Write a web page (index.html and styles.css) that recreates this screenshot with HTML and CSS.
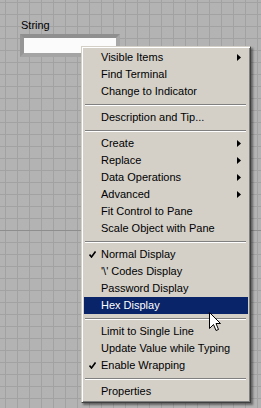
FILE: index.html
```html
<!DOCTYPE html>
<html lang="en">
<head>
    <meta charset="UTF-8">
    <title>Front Panel - String</title>
    <link rel="stylesheet" href="styles.css">
</head>
<body>
    <div class="panel">
        <div class="pane-split"></div>

        <!-- string control on the front panel -->
        <div class="control">
            <div class="control-label">String</div>
            <div class="control-frame">
                <div class="control-box"></div>
            </div>
        </div>

        <!-- shortcut menu -->
        <ul class="menu">
            <li class="item">Visible Items<svg class="arrow" width="4" height="7" viewBox="0 0 4 7"><polygon points="0,0 4,3.5 0,7" /></svg></li>
            <li class="item">Find Terminal</li>
            <li class="item">Change to Indicator</li>
            <li class="sep"></li>
            <li class="item">Description and Tip...</li>
            <li class="sep"></li>
            <li class="item">Create<svg class="arrow" width="4" height="7" viewBox="0 0 4 7"><polygon points="0,0 4,3.5 0,7" /></svg></li>
            <li class="item">Replace<svg class="arrow" width="4" height="7" viewBox="0 0 4 7"><polygon points="0,0 4,3.5 0,7" /></svg></li>
            <li class="item">Data Operations<svg class="arrow" width="4" height="7" viewBox="0 0 4 7"><polygon points="0,0 4,3.5 0,7" /></svg></li>
            <li class="item">Advanced<svg class="arrow" width="4" height="7" viewBox="0 0 4 7"><polygon points="0,0 4,3.5 0,7" /></svg></li>
            <li class="item">Fit Control to Pane</li>
            <li class="item">Scale Object with Pane</li>
            <li class="sep"></li>
            <li class="item"><svg class="check" width="7" height="7" viewBox="0 0 7 7"><path d="M0.5 3.5 L2.5 6 L6.5 0.5" /></svg>Normal Display</li>
            <li class="item">'\' Codes Display</li>
            <li class="item">Password Display</li>
            <li class="item active">Hex Display</li>
            <li class="sep"></li>
            <li class="item">Limit to Single Line</li>
            <li class="item">Update Value while Typing</li>
            <li class="item"><svg class="check" width="7" height="7" viewBox="0 0 7 7"><path d="M0.5 3.5 L2.5 6 L6.5 0.5" /></svg>Enable Wrapping</li>
            <li class="sep"></li>
            <li class="item">Properties</li>
        </ul>

        <svg class="cursor" width="12" height="20" viewBox="0 0 12 20">
            <path d="M0.5 0.5 L0.5 16.5 L4.5 12.5 L7 18.5 L9.5 17.5 L7 11.5 L11.5 11.5 Z" />
        </svg>
    </div>
</body>
</html>
```

FILE: styles.css
```css
body {
    margin: 0;
    padding: 0;
    font-family: 'Liberation Sans', Arial, sans-serif;
    font-size: 11px;
    color: #000;
}
.panel {
    position: relative;
    width: 261px;
    height: 408px;
    overflow: hidden;
    background-color: #b3b3b3;
    background-image:
        linear-gradient(to right, #a2a2a2 1px, transparent 1px),
        linear-gradient(to bottom, #a2a2a2 1px, transparent 1px);
    background-size: 12px 12px;
    background-position: 5px 2px;
}
.pane-split {
    position: absolute;
    left: 0;
    right: 0;
    top: 230px;
    height: 1px;
    background-color: #8e8e8e;
}
/* front panel objects */
.control {
    position: absolute;
    left: 20px;
    top: 18px;
}
.control-label {
    margin-left: 1px;
    line-height: 14px;
    height: 16px;
}
.control-frame {
    width: 92px;
    border-style: solid;
    border-width: 4px 4px 4px 4px;
    border-color: #8f8f8f #a7a7a7 #a4a4a4 #969696;
}
.control-box {
    height: 15px;
    background-color: #fbfbfb;
}
/* shortcut menu */
.menu {
    position: absolute;
    left: 81px;
    top: 46px;
    width: 164px;
    margin: 0;
    padding: 2px;
    list-style: none;
    background-color: #d4d0c8;
    border: 1px solid;
    border-color: #d4d0c8 #404040 #404040 #d4d0c8;
    box-shadow: inset 1px 1px 0 #fff, inset -1px -1px 0 #808080, 2px 2px 2px rgba(0, 0, 0, 0.45);
}
.item {
    position: relative;
    display: flex;
    align-items: center;
    height: 17px;
    line-height: 17px;
    padding-left: 17px;
    white-space: nowrap;
}
.item.active {
    background-color: #0a246a;
    color: #fff;
}
.arrow {
    position: absolute;
    right: 7px;
    top: 5px;
    fill: #000;
}
.check {
    position: absolute;
    left: 5px;
    top: 5px;
    fill: none;
    stroke: #000;
    stroke-width: 1.6;
}
.sep {
    height: 9px;
    margin: 0 2px 0 1px;
    background-image: linear-gradient(to bottom, transparent 4px, #808080 4px, #808080 5px, #fff 5px, #fff 6px, transparent 6px);
}
.cursor {
    position: absolute;
    left: 209px;
    top: 312px;
}
.cursor path {
    fill: #fff;
    stroke: #000;
    stroke-width: 1;
}
```
